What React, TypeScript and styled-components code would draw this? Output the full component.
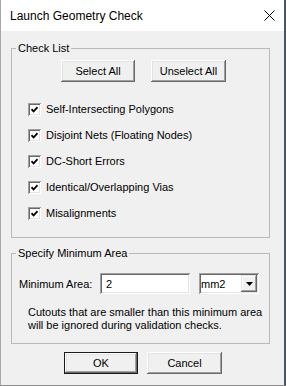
import React from "react";
import styled, { createGlobalStyle } from "styled-components";

const GlobalStyle = createGlobalStyle`
  html, body {
    margin: 0;
    padding: 0;
    background: #f0f0f0;
  }
  body {
    font-family: "Liberation Sans", Arial, sans-serif;
    font-size: 11px;
    color: #000;
  }
`;

const Window = styled.div`
  width: 286px;
  height: 386px;
  box-sizing: border-box;
  background: #f0f0f0;
  border-left: 1px solid #a8a8a8;
  border-right: 2px solid #4a5560;
  border-bottom: 1px solid #8a8a8a;
  display: flex;
  flex-direction: column;
`;

const TitleBar = styled.header`
  height: 31px;
  flex: none;
  background: #fff;
  display: flex;
  align-items: center;
  justify-content: space-between;
  padding: 0 9px 0 9px;
  font-size: 12px;
`;

const CloseIcon = styled.svg`
  display: block;
  width: 11px;
  height: 11px;
`;

const GroupBox = styled.fieldset<{ $top: number }>`
  margin: ${(p) => p.$top}px 14px 0 10px;
  padding: 0;
  border: 1px solid #b9b9b9;
  min-width: 0;
`;

const Legend = styled.legend`
  margin-left: 4px;
  padding: 0 2px;
  line-height: 14px;
`;

const ButtonRow = styled.div<{ $pad: string }>`
  display: flex;
  gap: 16px;
  padding: ${(p) => p.$pad};
`;

const Button = styled.button<{ $width: number; $default?: boolean }>`
  width: ${(p) => p.$width}px;
  height: 22px;
  box-sizing: border-box;
  margin: 0;
  padding: 0;
  font: inherit;
  color: #000;
  background: #f0f0f0;
  border: ${(p) => (p.$default ? "1px solid #1a1a1a" : "none")};
  box-shadow: inset -1px -1px 0 #696969, inset 1px 1px 0 #fff,
    inset -2px -2px 0 #a0a0a0, inset 2px 2px 0 #e3e3e3;
`;

const CheckList = styled.div`
  display: flex;
  flex-direction: column;
  margin-top: 14px;
  padding: 0 0 11px 16px;
`;

const CheckRow = styled.label`
  display: flex;
  align-items: center;
  gap: 5px;
  height: 26px;
`;

const Box = styled.span`
  width: 13px;
  height: 13px;
  flex: none;
  box-sizing: border-box;
  background: #fff;
  box-shadow: inset 1px 1px 0 #a0a0a0, inset -1px -1px 0 #fff,
    inset 2px 2px 0 #696969, inset -2px -2px 0 #e3e3e3;
  display: flex;
  align-items: center;
  justify-content: center;
`;

const AreaRow = styled.div`
  display: flex;
  align-items: center;
  gap: 9px;
  padding: 13px 0 0 7px;
`;

const FieldLabel = styled.span`
  width: 72px;
  flex: none;
  white-space: nowrap;
`;

const Sunken = styled.div<{ $width: number }>`
  width: ${(p) => p.$width}px;
  height: 21px;
  flex: none;
  box-sizing: border-box;
  background: #fff;
  box-shadow: inset 1px 1px 0 #a0a0a0, inset -1px -1px 0 #fff,
    inset 2px 2px 0 #696969, inset -2px -2px 0 #e3e3e3;
  display: flex;
  align-items: center;
`;

const TextValue = styled.span`
  padding-left: 6px;
`;

const ComboValue = styled.span`
  flex: 1;
  padding-left: 2px;
`;

const DropButton = styled.span`
  width: 16px;
  height: 17px;
  margin-right: 2px;
  background: #f0f0f0;
  box-shadow: inset -1px -1px 0 #696969, inset 1px 1px 0 #e3e3e3,
    inset -2px -2px 0 #a0a0a0, inset 2px 2px 0 #fff;
  display: flex;
  align-items: center;
  justify-content: center;
`;

const Note = styled.p`
  margin: 12px 0 0;
  padding: 0 0 11px 16px;
  line-height: 13px;
`;

const Footer = styled.div`
  display: flex;
  gap: 9px;
  padding: 8px 0 0 63px;
`;

const checks = [
  "Self-Intersecting Polygons",
  "Disjoint Nets (Floating Nodes)",
  "DC-Short Errors",
  "Identical/Overlapping Vias",
  "Misalignments",
];

export default function App() {
  return (
    <>
      <GlobalStyle />
      <Window>
        <TitleBar>
          <span>Launch Geometry Check</span>
          <CloseIcon viewBox="0 0 11 11">
            <path d="M0.5 0.5 L10.5 10.5 M10.5 0.5 L0.5 10.5" stroke="#000" strokeWidth="1" />
          </CloseIcon>
        </TitleBar>

        <GroupBox $top={10}>
          <Legend>Check List</Legend>
          <ButtonRow $pad="5px 0 0 49px">
            <Button $width={74}>Select All</Button>
            <Button $width={75}>Unselect All</Button>
          </ButtonRow>
          <CheckList>
            {checks.map((c) => (
              <CheckRow key={c}>
                <Box>
                  <svg width="7" height="7" viewBox="0 0 7 7">
                    <path d="M0.5 3.2 L2.6 5.4 L6.5 1.2" stroke="#000" strokeWidth="1.7" fill="none" />
                  </svg>
                </Box>
                {c}
              </CheckRow>
            ))}
          </CheckList>
        </GroupBox>

        <GroupBox $top={8}>
          <Legend>Specify Minimum Area</Legend>
          <AreaRow>
            <FieldLabel>Minimum Area:</FieldLabel>
            <Sunken $width={90}>
              <TextValue>2</TextValue>
            </Sunken>
            <Sunken $width={60}>
              <ComboValue>mm2</ComboValue>
              <DropButton>
                <svg width="7" height="4" viewBox="0 0 7 4">
                  <path d="M0 0 L7 0 L3.5 4 Z" fill="#000" />
                </svg>
              </DropButton>
            </Sunken>
          </AreaRow>
          <Note>
            Cutouts that are smaller than this minimum area
            <br />
            will be ignored during validation checks.
          </Note>
        </GroupBox>

        <Footer>
          <Button $width={74} $default>OK</Button>
          <Button $width={75}>Cancel</Button>
        </Footer>
      </Window>
    </>
  );
}
